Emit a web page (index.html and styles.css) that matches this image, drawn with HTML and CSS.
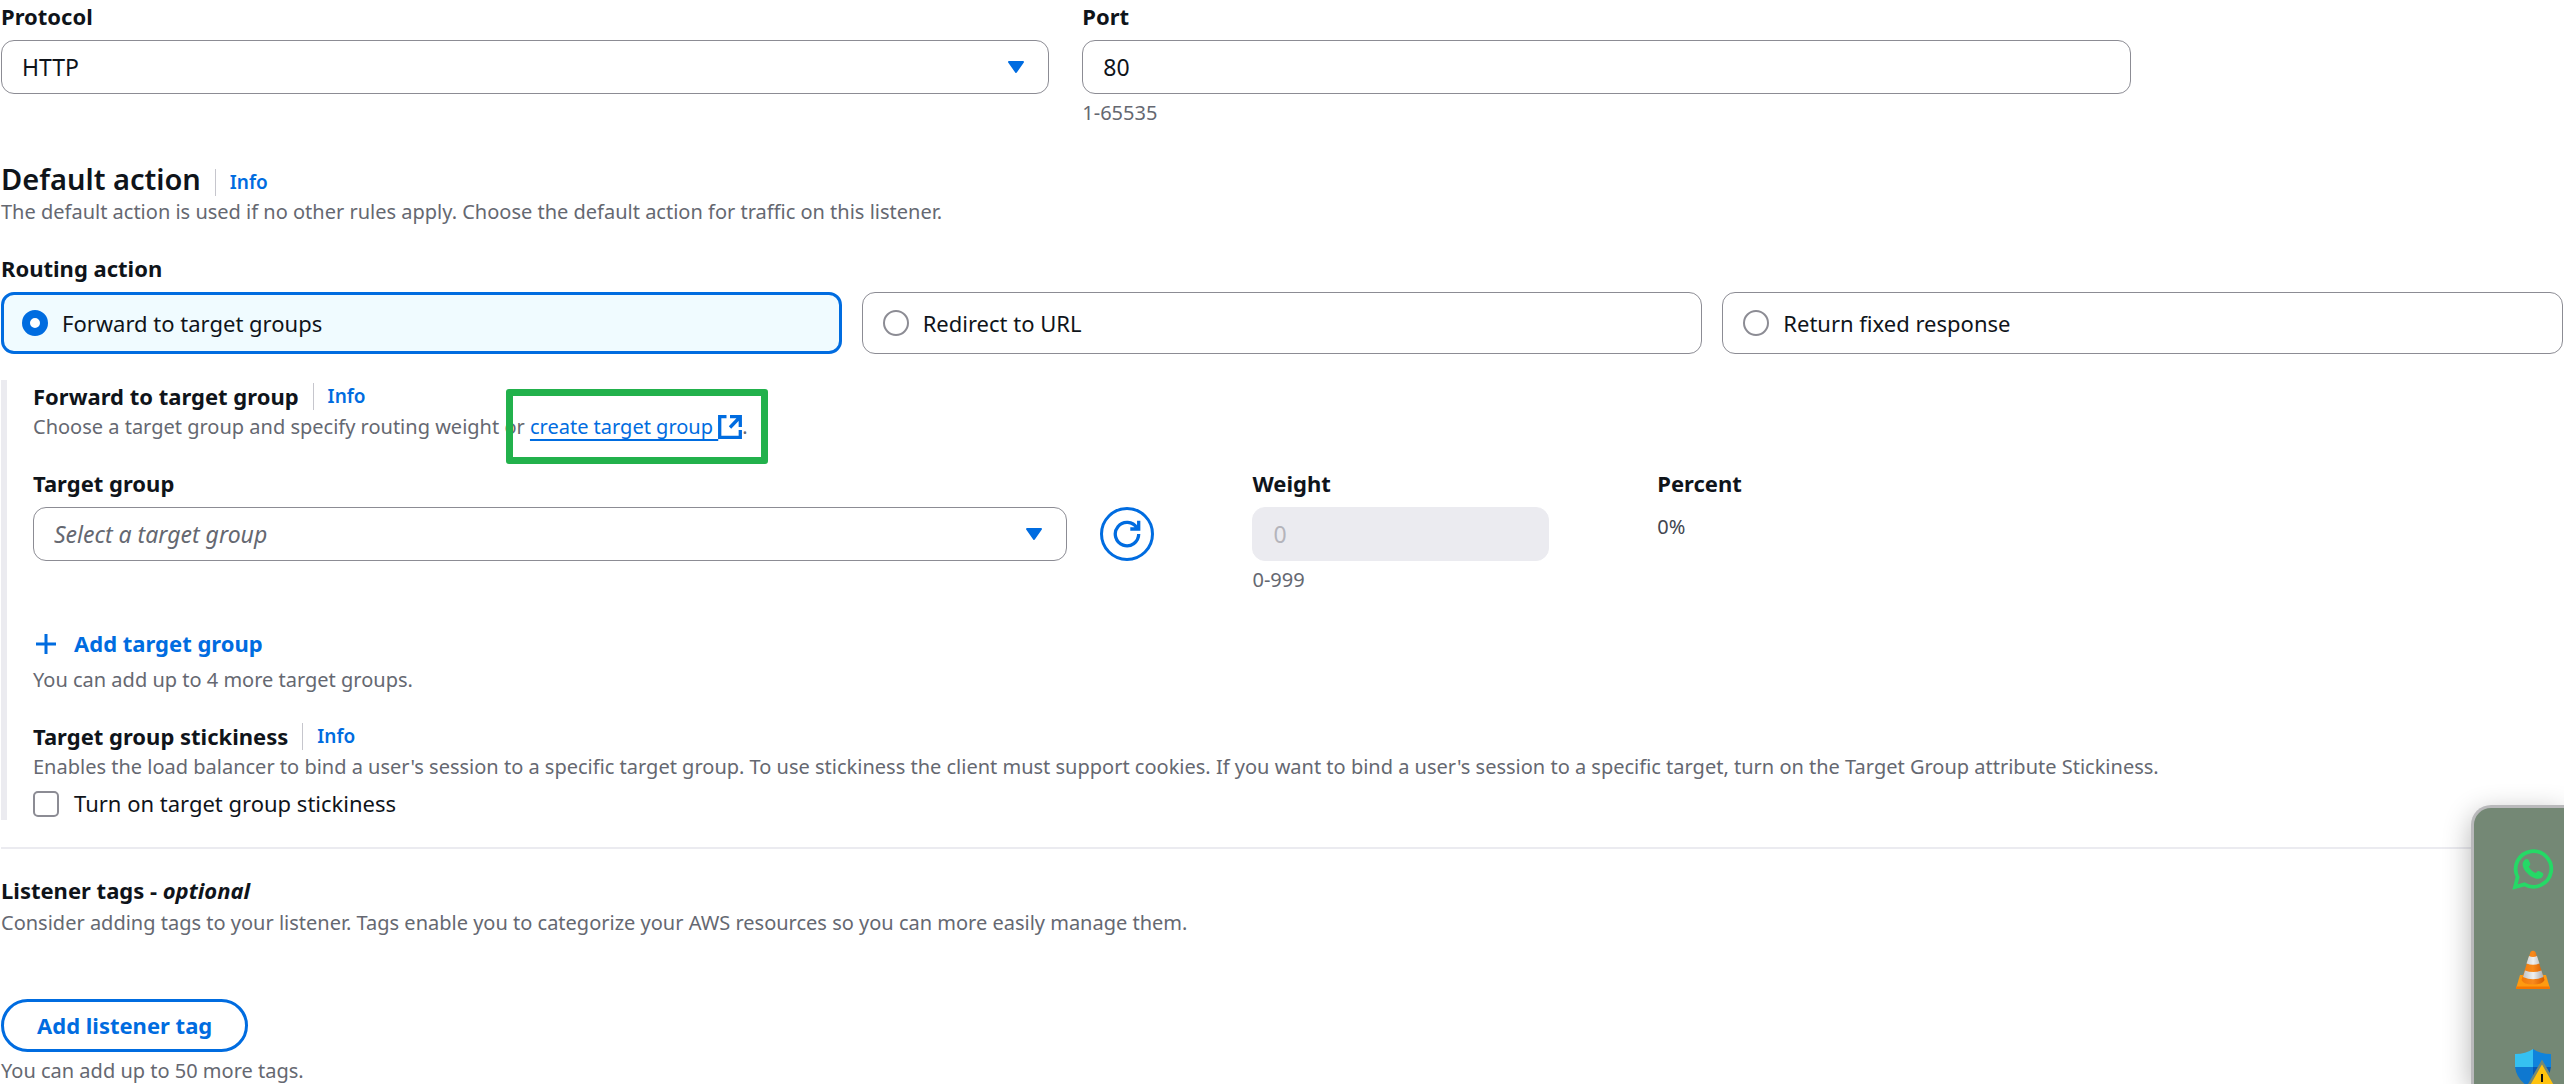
FILE: index.html
```html
<!DOCTYPE html>
<html lang="en">
<head>
<meta charset="utf-8">
<meta name="viewport" content="width=device-width, initial-scale=1">
<title>Listener settings</title>
<link rel="stylesheet" href="styles.css">
</head>
<body>
<main class="page">
  <div class="grid">
    <div class="field">
      <label class="label" for="protocol">Protocol</label>
      <div class="select-wrap">
        <select class="control select" id="protocol"><option>HTTP</option></select>
        <svg class="caret" viewBox="0 0 18 14" aria-hidden="true"><path d="M2 2h14L9 12z"/></svg>
      </div>
    </div>
    <div class="field">
      <label class="label" for="port">Port</label>
      <input class="control" id="port" type="text" value="80">
      <p class="hint">1-65535</p>
    </div>
  </div>

  <section class="default-action">
    <div class="heading-row"><h2 class="title">Default action</h2><a class="info info-title" href="#">Info</a></div>
    <p class="text">The default action is used if no other rules apply. Choose the default action for traffic on this listener.</p>
  </section>

  <fieldset class="routing">
    <legend class="label">Routing action</legend>
    <div class="tiles">
      <label class="tile tile-selected"><input class="radio" type="radio" name="routing" checked>Forward to target groups</label>
      <label class="tile"><input class="radio" type="radio" name="routing">Redirect to URL</label>
      <label class="tile"><input class="radio" type="radio" name="routing">Return fixed response</label>
    </div>
  </fieldset>

  <section class="forward">
    <div class="heading-row"><h3 class="label">Forward to target group</h3><a class="info" href="#">Info</a></div>
    <p class="text">Choose a target group and specify routing weight or <span class="callout-anchor"><a class="link" href="#">create target group <svg class="external" viewBox="0 0 24 24" aria-hidden="true"><path d="M8.500 1.700H1.700v20.600h20.600V15M12 1.700h10.300V12M22 2L12 12.500"/></svg></a>.<span class="callout"></span></span></p>

    <div class="target-row">
      <div class="target-cell">
        <div class="field target-field">
          <label class="label" for="target">Target group</label>
          <div class="select-wrap">
            <select class="control select placeholder" id="target"><option>Select a target group</option></select>
            <svg class="caret" viewBox="0 0 18 14" aria-hidden="true"><path d="M2 2h14L9 12z"/></svg>
          </div>
        </div>
        <button class="refresh" type="button" aria-label="Refresh target groups">
          <svg viewBox="0 0 28 28" aria-hidden="true"><path d="M25.700 14A11.700 11.700 0 1 1 24 8M25.700 .7V9H17.300"/></svg>
        </button>
      </div>
      <div class="weight-cell field">
        <label class="label" for="weight">Weight</label>
        <input class="control" id="weight" type="text" value="0" disabled>
        <p class="hint">0-999</p>
      </div>
      <div class="field">
        <span class="label">Percent</span>
        <p class="text percent">0%</p>
      </div>
    </div>

    <button class="add-group" type="button">
      <svg class="plus" viewBox="0 0 26 26" aria-hidden="true"><path d="M13 3v20M3 13h20"/></svg>Add target group
    </button>
    <p class="text add-note">You can add up to 4 more target groups.</p>

    <div class="heading-row stickiness"><h3 class="label">Target group stickiness</h3><a class="info" href="#">Info</a></div>
    <p class="text">Enables the load balancer to bind a user's session to a specific target group. To use stickiness the client must support cookies. If you want to bind a user's session to a specific target, turn on the Target Group attribute Stickiness.</p>
    <label class="check-row"><input class="checkbox" type="checkbox">Turn on target group stickiness</label>
  </section>

  <section class="tags">
    <h3 class="label">Listener tags - <em>optional</em></h3>
    <p class="text">Consider adding tags to your listener. Tags enable you to categorize your AWS resources so you can more easily manage them.</p>
    <button class="add-tag" type="button">Add listener tag</button>
    <p class="hint">You can add up to 50 more tags.</p>
  </section>
</main>

<aside class="dock" aria-label="Applications">
  <svg class="dock-icon" viewBox="0 0 42 42" role="img" aria-label="WhatsApp">
    <path d="M3 39l2.600-10A17.800 17.800 0 1 1 12.500 36.300z" fill="none" stroke="#25d966" stroke-width="3.800"/>
    <path d="M12.500 12c1-1.300 3.300-1.500 4-.2l1.800 4c.3 1-.8 2-1.600 3 1.600 3 4 5 7 6.300 1-1 1.800-2.400 2.900-2l4.200 2c1.200.8.3 3.600-1.200 4.600-3 2-7 1-11-1.500-3.600-2.400-6.600-6-7.700-9.600-.7-2.500-.2-4.800 1.600-6.600z" fill="#25d966"/>
  </svg>
  <svg class="dock-icon" viewBox="0 0 42 42" role="img" aria-label="VLC">
    <defs>
      <linearGradient id="cone"><stop offset="0" stop-color="#f07808"/><stop offset=".5" stop-color="#f98a1c"/><stop offset="1" stop-color="#d45a00"/></linearGradient>
      <linearGradient id="band"><stop offset="0" stop-color="#bfc3c6"/><stop offset=".5" stop-color="#f0f0f0"/><stop offset="1" stop-color="#a9adb0"/></linearGradient>
    </defs>
    <path d="M8 27h26l4 13.500H4z" fill="#ff9a10"/><path d="M4.500 38.500h33l.5 2.500H4z" fill="#f57600"/>
    <path d="M18.500 4q2.500-2.500 5 0l9 28q-2 4.500-11.500 4.500T9.500 32z" fill="url(#cone)"/>
    <path d="M17 8q4 2 8 0l2.500 7.500q-6.500 2.500-13 0zM13 22.500q8 3 16.500 0l2 6.500q-10.500 4.500-20.500 0z" fill="url(#band)"/>
  </svg>
  <svg class="dock-icon" viewBox="0 0 42 42" role="img" aria-label="Windows Security">
    <path d="M21 1Q14 6 3 6v13h18z" fill="#35c1f1"/><path d="M21 1q7 5 18 5v13H21z" fill="#0f83dc"/>
    <path d="M3 19h18v22Q5 34 3 19z" fill="#0f78d0"/><path d="M39 19H21v22q16-7 18-22z" fill="#0759b3"/>
    <path d="M30 14L14 42h32z" fill="#ffc20e" stroke="#748875" stroke-width="2.500"/>
    <path d="M30 26v8" stroke="#111" stroke-width="2"/>
  </svg>
</aside>
</body>
</html>
```
FILE: styles.css
```css
* { box-sizing: border-box; }

body {
  margin: 0;
  background: #fff;
  color: #0f141a;
  font: 22px/33px "Noto Sans", sans-serif;
}

h2, h3, p { margin: 0; }

.page { padding: 0 1px; }

.grid {
  display: grid;
  grid-template-columns: repeat(12, 1fr);
  column-gap: 33px;
  align-items: start;
}
.grid .field { grid-column: span 5; }

.field { display: flex; flex-direction: column; }

.label {
  display: block;
  padding: 0;
  font-size: 22px;
  line-height: 33px;
  font-weight: 700;
}

.control {
  width: 100%;
  height: 54px;
  margin: 7px 0 0;
  padding: 0 20px;
  border: 1px solid #8c8c94;
  border-radius: 13px;
  background: #fff;
  color: inherit;
  font: inherit;
  font-size: 23px;
}

.control:disabled { border-color: #ebebf0; background: #ebebf0; color: #b4b4bb; }

.select-wrap { display: grid; align-items: center; }
.select-wrap > * { grid-area: 1 / 1; }
.select { appearance: none; }
.placeholder { color: #656871; font-style: italic; }

.caret {
  width: 18px;
  height: 14px;
  margin: 7px 24px 0 0;
  justify-self: end;
  pointer-events: none;
  fill: #006ce0;
  stroke: #006ce0;
  stroke-width: 2;
  stroke-linejoin: round;
}

.text, .hint { color: #656871; font-size: 20px; line-height: 27px; }
.hint { margin-top: 5px; }

.default-action { margin-top: 34px; }
.heading-row { display: flex; align-items: center; }
.title { font-size: 29px; line-height: 38px; font-weight: 600; }

.info {
  margin-left: 14px;
  padding-left: 14px;
  border-left: 1px solid #c6c6cd;
  color: #006ce0;
  font-size: 19px;
  line-height: 27px;
  font-weight: 600;
  text-decoration: none;
}

.info-title { margin-top: 6px; }

.routing { min-width: 0; margin: 27px 0 0; padding: 0; border: 0; }
.tiles { display: grid; grid-template-columns: repeat(3, 1fr); gap: 20px; margin-top: 7px; }

.tile {
  display: flex;
  align-items: center;
  gap: 14px;
  height: 62px;
  padding: 0 20px;
  border: 1px solid #8c8c94;
  border-radius: 13px;
}

.tile-selected { padding: 0 18px; border: 3px solid #006ce0; background: #f0fbff; }

.radio, .checkbox {
  appearance: none;
  flex: none;
  width: 26px;
  height: 26px;
  margin: 0;
  border: 2px solid #8c8c94;
  background: #fff;
}

.radio { border-radius: 50%; }
.radio:checked { border: 8px solid #006ce0; }
.checkbox { border-radius: 5px; }

.forward { margin-top: 26px; padding-left: 26px; border-left: 6px solid #ebebf0; }

.callout-anchor { position: relative; }
.link {
  color: #006ce0;
  text-decoration: underline;
  text-decoration-thickness: 2px;
  text-underline-offset: 5px;
}
.external {
  width: 24px;
  height: 24px;
  vertical-align: -5px;
  fill: none;
  stroke: #006ce0;
  stroke-width: 3.3;
}
.callout {
  position: absolute;
  inset: -24px -20px -24px -24px;
  border: 7px solid #22b14c;
  border-radius: 3px;
}

.target-row { display: grid; grid-template-columns: 482fr 160fr 358fr; margin-top: 27px; }
.target-cell { display: flex; align-items: flex-start; gap: 33px; padding-right: 98px; }
.target-field { flex: 1; }
.weight-cell { padding-right: 108px; }
.percent { margin-top: 13px; color: #424650; }

.refresh {
  display: grid;
  place-items: center;
  width: 54px;
  height: 54px;
  margin: 40px 0 0;
  padding: 0;
  border: 3px solid #006ce0;
  border-radius: 50%;
  background: #fff;
}
.refresh svg { width: 28px; height: 28px; fill: none; stroke: #006ce0; stroke-width: 3.3; }

.add-group {
  display: flex;
  align-items: center;
  gap: 15px;
  margin: 34px 0 0;
  padding: 0;
  border: 0;
  background: none;
  color: #006ce0;
  font: inherit;
  font-weight: 700;
}
.plus { width: 26px; height: 26px; stroke: #006ce0; stroke-width: 3; }
.add-note { margin-top: 6px; }
.stickiness { margin-top: 27px; }
.check-row { display: flex; align-items: center; gap: 15px; margin-top: 7px; }

.tags { margin-top: 27px; padding-top: 25px; border-top: 2px solid #ebebf0; }
.tags .text { margin-top: 2px; }

.add-tag {
  display: block;
  height: 53px;
  margin: 63px 0 0;
  padding: 0 33px;
  border: 3px solid #006ce0;
  border-radius: 27px;
  background: #fff;
  color: #006ce0;
  font: inherit;
  font-weight: 700;
}

.dock {
  position: fixed;
  right: 0;
  bottom: 0;
  width: 93px;
  height: 279px;
  padding: 40px 9px 0 38px;
  display: flex;
  flex-direction: column;
  gap: 58px;
  overflow: hidden;
  border: solid #b9b9bb;
  border-width: 3px 0 0 3px;
  border-radius: 20px 0 0 0;
  background: #748875;
  box-shadow: 0 8px 28px rgba(0, 0, 0, .3);
}
.dock-icon { flex: none; width: 42px; height: 42px; }
```
